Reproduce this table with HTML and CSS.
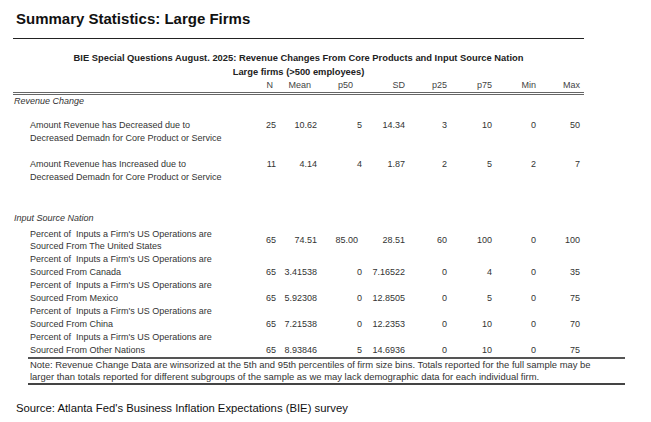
FILE: index.html
```html
<!DOCTYPE html>
<html>
<head>
<meta charset="utf-8">
<title>Summary Statistics: Large Firms</title>
<link rel="stylesheet" href="styles.css">
</head>
<body>
<h1 class="title">Summary Statistics: Large Firms</h1>
<div class="rule"></div>
<section class="table">
  <div class="caption caption-first">BIE Special Questions August. 2025: Revenue Changes From Core Products and Input Source Nation</div>
  <div class="caption">Large firms (&gt;500 employees)</div>
  <div class="row head">
    <span></span><span class="h-n">N</span><span class="h-mean">Mean</span><span class="h-p50">p50</span><span>SD</span><span>p25</span><span>p75</span><span>Min</span><span>Max</span>
  </div>
  <div class="group">Revenue Change</div>
  <div class="row item item-first">
    <span class="label">Amount Revenue has Decreased due to<br>Decreased Demadn for Core Product or Service</span>
    <span>25</span><span>10.62</span><span>5</span><span>14.34</span><span>3</span><span>10</span><span>0</span><span>50</span>
  </div>
  <div class="row item">
    <span class="label">Amount Revenue has Increased due to<br>Decreased Demadn for Core Product or Service</span>
    <span>11</span><span>4.14</span><span>4</span><span>1.87</span><span>2</span><span>5</span><span>2</span><span>7</span>
  </div>
  <div class="group group-second">Input Source Nation</div>
  <div class="row src src-first">
    <span class="label">Percent of&nbsp; Inputs a Firm's US Operations are<br>Sourced From The United States</span>
    <span>65</span><span>74.51</span><span class="v-p50">85.00</span><span>28.51</span><span>60</span><span>100</span><span>0</span><span>100</span>
  </div>
  <div class="row src src-end">
    <span class="label">Percent of&nbsp; Inputs a Firm's US Operations are<br>Sourced From Canada</span>
    <span>65</span><span>3.41538</span><span>0</span><span>7.16522</span><span>0</span><span>4</span><span>0</span><span>35</span>
  </div>
  <div class="row src src-end">
    <span class="label">Percent of&nbsp; Inputs a Firm's US Operations are<br>Sourced From Mexico</span>
    <span>65</span><span>5.92308</span><span>0</span><span>12.8505</span><span>0</span><span>5</span><span>0</span><span>75</span>
  </div>
  <div class="row src src-end">
    <span class="label">Percent of&nbsp; Inputs a Firm's US Operations are<br>Sourced From China</span>
    <span>65</span><span>7.21538</span><span>0</span><span>12.2353</span><span>0</span><span>10</span><span>0</span><span>70</span>
  </div>
  <div class="row src src-end">
    <span class="label">Percent of&nbsp; Inputs a Firm's US Operations are<br>Sourced From Other Nations</span>
    <span>65</span><span>8.93846</span><span>5</span><span>14.6936</span><span>0</span><span>10</span><span>0</span><span>75</span>
  </div>
</section>
<div class="note">Note: Revenue Change Data are winsorized at the 5th and 95th percentiles of firm size bins. Totals reported for the full sample may be<br>larger than totals reported for different subgroups of the sample as we may lack demographic data for each individual firm.</div>
<p class="source">Source: Atlanta Fed's Business Inflation Expectations (BIE) survey</p>
</body>
</html>
```
FILE: styles.css
```css
body {
  margin: 0;
  background: #ffffff;
  font-family: "Liberation Sans", Arial, sans-serif;
  color: #333333;
}

.title {
  margin: 10px 0 0 16px;
  font-size: 15px;
  line-height: 18px;
  font-weight: bold;
  color: #111111;
}

.rule {
  margin: 10px 0 0 13px;
  width: 571px;
  height: 1px;
  background: #222222;
}

.table {
  margin-left: 13px;
  width: 571px;
  font-size: 9px;
}

.caption {
  text-align: center;
  font-weight: bold;
  font-size: 9.35px;
  line-height: 14px;
  color: #222222;
}

.caption-first {
  margin-top: 12px;
}

.row {
  display: grid;
  grid-template-columns: 233px 30px 41px 45px 43px 42px 45px 44px 44px;
  text-align: right;
}

.row .label {
  text-align: left;
  padding-left: 17px;
}

.head {
  line-height: 13px;
  color: #444444;
  border-bottom: 3px double #666666;
}

.h-n { padding-right: 3px; }
.h-mean { padding-right: 6px; }
.h-p50 { padding-right: 9px; }
.v-p50 { padding-right: 4px; }

.group {
  font-style: italic;
  line-height: 13px;
  padding-left: 1px;
}

.group-second {
  margin-top: 28px;
}

.item {
  line-height: 13px;
  align-items: start;
  margin-top: 13px;
}

.item-first {
  margin-top: 10.5px;
}

.src {
  line-height: 12.9px;
  align-items: end;
}

.src-first {
  margin-top: 3px;
  align-items: center;
}

.note {
  margin-left: 28px;
  width: 595px;
  padding-left: 2px;
  font-size: 9.45px;
  line-height: 12px;
  border-top: 2px solid #555555;
  border-bottom: 2px solid #444444;
}

.source {
  margin: 16px 0 0 16px;
  font-size: 11.3px;
  line-height: 14px;
  color: #111111;
}
```
